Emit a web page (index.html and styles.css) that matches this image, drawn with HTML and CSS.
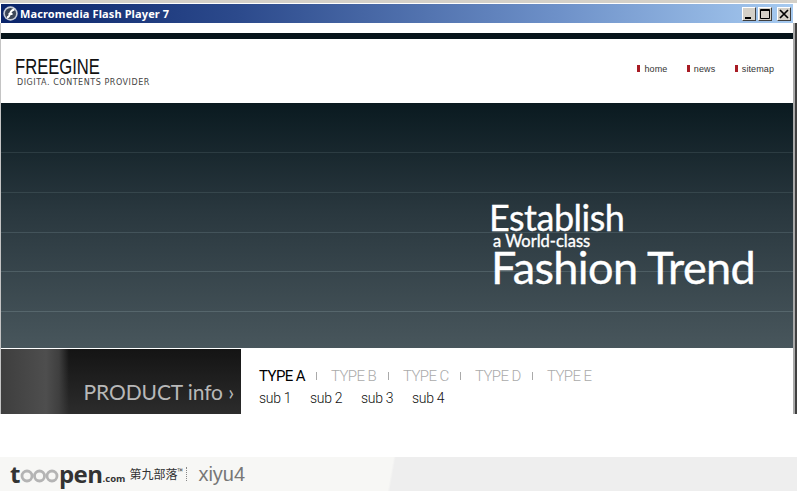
FILE: index.html
```html
<!DOCTYPE html>
<html lang="en">
<head>
<meta charset="utf-8">
<title>Macromedia Flash Player 7</title>
<link rel="stylesheet" href="styles.css">
</head>
<body>
<div class="window">
  <div class="titlebar">
    <svg class="app-icon" width="15" height="15" viewBox="0 0 15 15"><circle cx="7.5" cy="7.5" r="7.2" fill="#c9ced8"/><circle cx="7.5" cy="7.5" r="5.6" fill="#3c4658"/><path d="M4 11.5C7 11 6.5 8.5 7.5 6.5S9.5 3.6 11.5 3.5M5.5 8h4" fill="none" stroke="#fff" stroke-width="1.9"/></svg>
    <span class="title">Macromedia Flash Player 7</span>
    <div class="controls">
      <span class="ctl"><svg width="12" height="12" viewBox="0 0 12 12"><path d="M2 9h6v2H2z" fill="#000"/></svg></span>
      <span class="ctl"><svg width="12" height="12" viewBox="0 0 12 12"><path d="M1.5 1.5h9v9h-9z" fill="none" stroke="#000"/><path d="M1.5 2.5h9" stroke="#000"/></svg></span>
      <span class="ctl"><svg width="12" height="12" viewBox="0 0 12 12"><path d="M2 2l8 8M10 2l-8 8" stroke="#000" stroke-width="1.7"/></svg></span>
    </div>
  </div>
  <div class="content">
    <div class="topbar"></div>
    <header class="header">
      <div class="brand">
        <div class="brand-name">FREEGINE</div>
        <div class="brand-sub">DIGITA. CONTENTS PROVIDER</div>
      </div>
      <nav class="topnav">
        <a class="navlink">home</a>
        <a class="navlink">news</a>
        <a class="navlink">sitemap</a>
      </nav>
    </header>
    <section class="hero">
      <div class="slogan">
        <div class="s-big">Establish</div>
        <div class="s-small">a World-class</div>
        <div class="s-huge">Fashion Trend</div>
      </div>
    </section>
    <section class="product">
      <div class="product-card"><span class="product-label">PRODUCT info ›</span></div>
      <div class="product-menu">
        <div class="types">
          <span class="type active">TYPE A</span><i class="sep"></i>
          <span class="type">TYPE B</span><i class="sep"></i>
          <span class="type">TYPE C</span><i class="sep"></i>
          <span class="type">TYPE D</span><i class="sep"></i>
          <span class="type">TYPE E</span>
        </div>
        <div class="subs">
          <span class="sub">sub 1</span>
          <span class="sub">sub 2</span>
          <span class="sub">sub 3</span>
          <span class="sub">sub 4</span>
        </div>
      </div>
    </section>
  </div>
  <footer class="mark">
    <span class="logo">t<svg class="rings" width="39" height="16" viewBox="0 0 39 16"><g fill="none" stroke="#b4b4b4" stroke-width="2.8"><circle cx="7" cy="9" r="5"/><circle cx="19.5" cy="9" r="5"/><circle cx="32" cy="9" r="5"/></g></svg>pen</span><span class="dotcom">.com</span>
    <span class="cn">第九部落<sup>™</sup></span>
    <span class="dots"></span>
    <span class="user">xiyu4</span>
  </footer>
</div>
</body>
</html>
```
FILE: styles.css
```css
* { box-sizing: border-box; }
html, body { margin: 0; height: 100%; overflow: hidden; background: #fff; }
.window {
  width: 797px; height: 491px; position: relative;
  display: flex; flex-direction: column;
  padding-top: 4px;
  background: linear-gradient(#d4d0c8, #d4d0c8) 0 0 / 100% 3px no-repeat, #fff;
}
.titlebar {
  height: 19px; flex: none; margin-left: 1px; margin-right: 4px;
  display: flex; align-items: center; padding: 0 2px 0 2px;
  background: linear-gradient(90deg, #0a246a 0%, #2c4a8c 30%, #6d90c8 70%, #a6caf0 100%);
}
.app-icon { flex: none; margin-right: 2px; }
.title { font: bold 11px/19px "Noto Sans", sans-serif; color: #fff; letter-spacing: .12px; }
.controls { margin-left: auto; display: flex; gap: 2px; }
.ctl {
  width: 14px; height: 14px; background: #d4d0c8; display: flex; align-items: center; justify-content: center;
  border: 1px solid; border-color: #fff #404040 #404040 #fff;
}
.ctl + .ctl + .ctl { margin-left: 3px; }
.content {
  flex: none; height: 391px; margin-right: 2px;
  padding-top: 10px; background: #fff;
  border-left: 1px solid #c4c4c4;
  border-right: 2px solid #a9a9a9;
  box-shadow: 2px 0 0 #404040;
  display: flex; flex-direction: column;
}
.topbar { height: 6px; background: #06141a; flex: none; }
.header { height: 64px; flex: none; display: flex; align-items: flex-start; justify-content: space-between; }
.brand { padding: 17px 0 0 14px; }
.brand-name {
  font: 22px/22px "Liberation Sans", sans-serif; color: #111;
  transform: scaleX(.755); transform-origin: 0 0; white-space: nowrap;
}
.brand-sub { font: 8px/9px "DejaVu Sans", sans-serif; color: #444; letter-spacing: .55px; margin: 0 0 0 2px; }
.topnav { display: flex; gap: 19.5px; padding: 24px 19px 0 0; }
.navlink {
  font: 9px/12px "Liberation Sans", sans-serif; color: #333; padding-left: 7px; letter-spacing: .1px;
  background: linear-gradient(#a81c24, #a81c24) 0 2px / 3px 7px no-repeat;
}
.hero {
  height: 245px; flex: none; position: relative;
  background:
    linear-gradient(#2c3c42, #2c3c42) 0 49px / 100% 1px no-repeat,
    linear-gradient(#36464c, #36464c) 0 89px / 100% 1px no-repeat,
    linear-gradient(#43535a, #43535a) 0 129px / 100% 1px no-repeat,
    linear-gradient(#4e5e64, #4e5e64) 0 168px / 100% 1px no-repeat,
    linear-gradient(#56666c, #56666c) 0 208px / 100% 1px no-repeat,
    linear-gradient(#0a1a20, #2a383f 45%, #48565c 100%);
}
.slogan { position: absolute; left: 488px; top: 95px; color: #fff; font-family: Lato, "Noto Sans", sans-serif; -webkit-text-stroke: .35px #fff; }
.s-big { font-size: 36px; line-height: 38px; letter-spacing: -.5px; }
.s-small { font-size: 16.5px; line-height: 13px; margin: -1px 0 0 4px; }
.s-huge { font-size: 45px; line-height: 44px; margin: -3px 0 0 2px; letter-spacing: -.6px; }
.product { display: flex; margin-top: 1px; flex: none; }
.product-card {
  width: 240px; height: 65px; flex: none; display: flex; align-items: flex-end; justify-content: flex-end; padding: 0 7px 9px 0;
  background:
    linear-gradient(90deg, #3e3e3e 0, #4e4e4e 45px, #3f3f3f 58px, rgba(40,40,40,0) 68px),
    linear-gradient(#141414, #2c2c2c);
}
.product-label { font: 21px/26px Lato, sans-serif; color: #b8b8b8; letter-spacing: -.1px; }
.product-menu { padding: 18px 0 0 18px; }
.types { display: flex; align-items: center; height: 18px; }
.type { font: 300 15px/18px Roboto, sans-serif; color: #aaa; letter-spacing: -.6px; width: 44px; white-space: nowrap; }
.type.active { color: #000; font-weight: 400; }
.sep { width: 1px; height: 8px; background: #aaa; margin: 0 14px 0 13px; }
.subs { display: flex; gap: 20px; margin-top: 4px; }
.sub { font: 300 14px/18px Roboto, sans-serif; color: #111; width: 31px; white-space: nowrap; letter-spacing: -.3px; }
.mark {
  position: absolute; left: 0; right: 0; bottom: 0; height: 34px;
  display: flex; align-items: center; padding-left: 10px; color: #333;
  background: linear-gradient(100deg, #f7f7f5 49%, #eeeeee 49.3%);
}
.logo { font: bold 24px/28px "Open Sans", sans-serif; color: #333; letter-spacing: -.5px; display: inline-flex; align-items: flex-end; }
.rings { margin-bottom: 5px; }
.dotcom { font: bold 9.5px/12px "Open Sans", sans-serif; color: #333; margin-top: 9px; margin-right: 4px; }
.cn { font: 12px/14px "Noto Sans CJK SC", sans-serif; color: #333; }
.cn sup { font-size: 7px; line-height: 0; }
.dots { width: 0; height: 14px; border-left: 1px dotted #888; margin: 0 11px 0 4px; }
.user { font: 20px/22px "Liberation Sans", sans-serif; color: #777; }
```
